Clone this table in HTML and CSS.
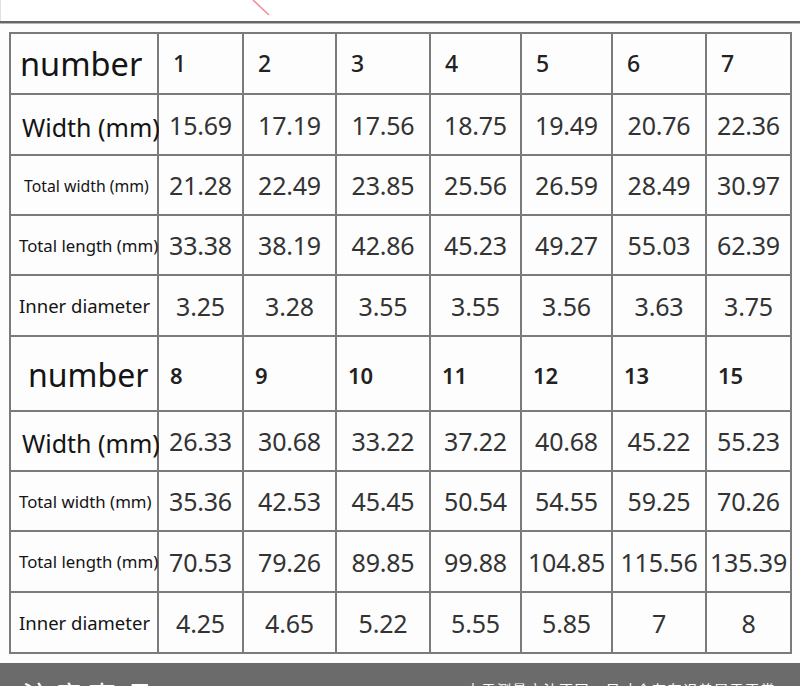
FILE: index.html
```html
<!DOCTYPE html>
<html lang="en">
<head>
<meta charset="utf-8">
<title>Size chart</title>
<link rel="stylesheet" href="styles.css">
</head>
<body>
<div class="page">
  <div class="top">
    <svg class="mark" width="24" height="18" viewBox="0 0 24 18"><line x1="2" y1="0" x2="18" y2="15" stroke="#ee8f95" stroke-width="1.6"/></svg>
  </div>
  <div class="rule"></div>
  <div class="chart">
    <div class="cell label head">number</div>
    <div class="cell num">1</div><div class="cell num">2</div><div class="cell num">3</div><div class="cell num">4</div><div class="cell num">5</div><div class="cell num">6</div><div class="cell num">7</div>

    <div class="cell label big">Width (mm)</div>
    <div class="cell val">15.69</div><div class="cell val">17.19</div><div class="cell val">17.56</div><div class="cell val">18.75</div><div class="cell val">19.49</div><div class="cell val">20.76</div><div class="cell val">22.36</div>

    <div class="cell label small">Total width (mm)</div>
    <div class="cell val">21.28</div><div class="cell val">22.49</div><div class="cell val">23.85</div><div class="cell val">25.56</div><div class="cell val">26.59</div><div class="cell val">28.49</div><div class="cell val">30.97</div>

    <div class="cell label mid">Total length (mm)</div>
    <div class="cell val">33.38</div><div class="cell val">38.19</div><div class="cell val">42.86</div><div class="cell val">45.23</div><div class="cell val">49.27</div><div class="cell val">55.03</div><div class="cell val">62.39</div>

    <div class="cell label inner">Inner diameter</div>
    <div class="cell val">3.25</div><div class="cell val">3.28</div><div class="cell val">3.55</div><div class="cell val">3.55</div><div class="cell val">3.56</div><div class="cell val">3.63</div><div class="cell val">3.75</div>

    <div class="cell label head head2">number</div>
    <div class="cell num num2">8</div><div class="cell num num2">9</div><div class="cell num num2">10</div><div class="cell num num2">11</div><div class="cell num num2">12</div><div class="cell num num2">13</div><div class="cell num num2">15</div>

    <div class="cell label big">Width (mm)</div>
    <div class="cell val">26.33</div><div class="cell val">30.68</div><div class="cell val">33.22</div><div class="cell val">37.22</div><div class="cell val">40.68</div><div class="cell val">45.22</div><div class="cell val">55.23</div>

    <div class="cell label mid">Total width (mm)</div>
    <div class="cell val">35.36</div><div class="cell val">42.53</div><div class="cell val">45.45</div><div class="cell val">50.54</div><div class="cell val">54.55</div><div class="cell val">59.25</div><div class="cell val">70.26</div>

    <div class="cell label mid">Total length (mm)</div>
    <div class="cell val">70.53</div><div class="cell val">79.26</div><div class="cell val">89.85</div><div class="cell val">99.88</div><div class="cell val">104.85</div><div class="cell val">115.56</div><div class="cell val">135.39</div>

    <div class="cell label inner">Inner diameter</div>
    <div class="cell val">4.25</div><div class="cell val">4.65</div><div class="cell val">5.22</div><div class="cell val">5.55</div><div class="cell val">5.85</div><div class="cell val">7</div><div class="cell val">8</div>
  </div>
  <div class="band">
    <span class="band-title">注意事项</span>
    <span class="band-note">由于测量方法不同，尺寸会存在误差属于正常</span>
  </div>
</div>
</body>
</html>
```

FILE: styles.css
```css
* { box-sizing: border-box; }
html, body { margin: 0; padding: 0; background: #ffffff; }
body { font-family: "Noto Sans", "Open Sans", "Noto Sans CJK SC", sans-serif; }

.page { width: 800px; height: 686px; overflow: hidden; background: #fdfdfd; }

.top {
  position: relative;
  height: 21px;
  background: #ffffff;
  border-left: 1px solid #e2e2e2;
}
.mark { position: absolute; left: 250px; top: 0; }

.rule {
  height: 3px;
  background: #666666;
  border-bottom: 1px solid #b5b5b5;
}

.chart {
  margin: 8px 0 0 9px;
  width: 783px;
  display: grid;
  grid-template-columns: 146px 83px 91px 92px 89px 89px 92px 83px;
  grid-template-rows: 59px 59px 58px 58px 59px 73px 58px 58px 59px 59px;
  gap: 2px;
  padding: 2px;
  background: #7b7b7b;
}

.cell {
  background: #fdfdfd;
  display: flex;
  align-items: center;
  white-space: nowrap;
  color: #333333;
}

.label { color: #141414; padding-left: 10px; }
.head { font-size: 32.5px; padding-left: 9px; }
.head2 { font-size: 32px; padding-left: 17px; padding-top: 2px; }
.big { font-size: 25px; padding-left: 11px; padding-top: 4px; }
.small { font-size: 15.8px; padding-left: 13px; padding-top: 2px; }
.mid { font-size: 16.8px; padding-left: 8px; }
.inner { font-size: 18.5px; padding-left: 8px; }

.num {
  font-size: 23px;
  font-weight: 500;
  color: #222222;
  padding-left: 14px;
  padding-bottom: 2px;
}
.num2 { padding-left: 11px; padding-top: 2px; padding-bottom: 0; font-weight: 600; font-size: 22px; }

.val {
  justify-content: center;
  font-size: 25px;
  color: #333333;
  letter-spacing: -0.2px;
}

.band {
  margin-top: 9px;
  height: 23px;
  background: #6b6b6b;
  display: flex;
  justify-content: space-between;
  align-items: flex-start;
  overflow: hidden;
  color: #ffffff;
}
.band-title {
  font-size: 28px;
  line-height: 1;
  margin: 18px 0 0 22px;
  letter-spacing: 5px;
  font-family: "Noto Sans CJK SC", sans-serif;
}
.band-note {
  font-size: 14px;
  line-height: 1;
  margin: 19px 24px 0 0;
  letter-spacing: 1.5px;
  font-family: "Noto Sans CJK SC", sans-serif;
}
```
